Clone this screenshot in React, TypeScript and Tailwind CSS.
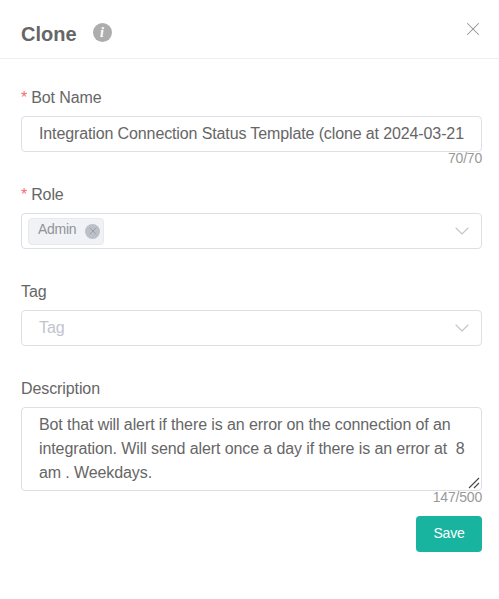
import { ChevronDown, X } from 'lucide-react';

function Label({ text, required }: { text: string; required?: boolean }) {
  return (
    <div className="h-[22px] leading-[22px] text-[16px] tracking-[-0.1px] text-[#666666] mb-[7px]">
      {required && <span className="text-[#f56c6c] mr-[4px]">*</span>}
      {text}
    </div>
  );
}

function Counter({ text }: { text: string }) {
  return <div className="h-[12px] leading-[12px] text-[14px] tracking-[-0.2px] text-right text-[#999999]">{text}</div>;
}

export default function App() {
  return (
    <div className="w-[499px] h-[599px] bg-white font-['Liberation_Sans',Arial,sans-serif]">
      <header className="h-[59px] border-b border-[#ebeef5] pl-[21px] pr-[15px] flex items-center">
        <h1 className="text-[20px] font-bold text-[#666666] mt-[10px]">Clone</h1>
        <span className="ml-[16px] mt-[7px] w-[19px] h-[19px] rounded-full bg-[#adadad] text-white flex items-center justify-center font-['Liberation_Serif',serif] italic font-bold text-[14px]">
          i
        </span>
        <X className="ml-auto w-[22px] h-[22px] text-[#909399]" strokeWidth={1.1} />
      </header>

      <main className="pl-[21px] pr-[17px] pt-[28px] flex flex-col">
        <Label text="Bot Name" required />
        <div className="h-[36px] border border-[#dcdfe6] rounded-[4px] pl-[17px] flex items-center text-[16px] tracking-[-0.12px] text-[#666666] overflow-hidden whitespace-nowrap">
          Integration Connection Status Template (clone at 2024-03-21
        </div>
        <Counter text="70/70" />

        <div className="mt-[20px]">
          <Label text="Role" required />
        </div>
        <div className="h-[36px] border border-[#dcdfe6] rounded-[4px] pl-[6px] pr-[7px] flex items-center">
          <span className="h-[27px] w-[76px] pl-[9px] rounded-[4px] bg-[#f0f2f5] border border-[#e9e9eb] text-[14px] tracking-[-0.3px] text-[#909399] flex items-center">
            <span className="mt-[-3px]">Admin</span>
            <span className="ml-[9px] w-[15px] h-[15px] rounded-full bg-[#bcc0c9] text-[#909399] flex items-center justify-center">
              <X className="w-[12px] h-[12px]" strokeWidth={1.5} />
            </span>
          </span>
          <ChevronDown className="ml-auto w-[24px] h-[24px] text-[#c0c4cc]" strokeWidth={1.1} />
        </div>

        <div className="mt-[32px]">
          <Label text="Tag" />
        </div>
        <div className="h-[36px] border border-[#dcdfe6] rounded-[4px] pl-[17px] pr-[7px] flex items-center text-[16px] tracking-[-0.1px] text-[#c0c4cc]">
          Tag
          <ChevronDown className="ml-auto w-[24px] h-[24px] text-[#c0c4cc]" strokeWidth={1.1} />
        </div>

        <div className="mt-[32px]">
          <Label text="Description" />
        </div>
        <div className="relative h-[84px] border border-[#dcdfe6] rounded-[4px] pl-[17px] pr-[12px] pt-[5px] text-[16px] tracking-[-0.1px] leading-[24px] text-[#666666]">
          Bot that will alert if there is an error on the connection of an integration. Will send alert once a day if there is an error at&nbsp; 8 am . Weekdays.
          <svg className="absolute right-[1px] bottom-[1px] w-[12px] h-[12px]" viewBox="0 0 12 12" fill="none" stroke="#444" strokeWidth="1.1">
            <path d="M1 11 11 1M6 11l5-5" />
          </svg>
        </div>
        <Counter text="147/500" />

        <button className="mt-[13px] self-end w-[66px] h-[36px] pb-[2px] rounded-[4px] bg-[#18b4a0] text-white text-[14px] tracking-[-0.2px]">
          Save
        </button>
      </main>
    </div>
  );
}
